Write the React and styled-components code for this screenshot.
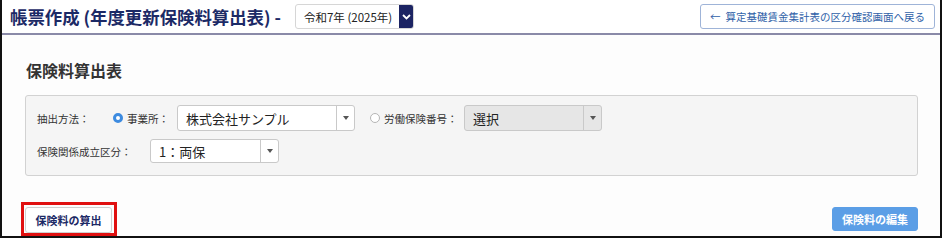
import React, { useState } from "react";
import styled, { createGlobalStyle } from "styled-components";

const GlobalStyle = createGlobalStyle`
  body {
    margin: 0;
    background: #ffffff;
    font-family: "Noto Sans CJK JP", "Noto Sans", sans-serif;
  }
`;

const Frame = styled.div`
  width: 938px;
  height: 236px;
  border: 2px solid #111;
  border-top: none;
  background: #fdfdfd;
  overflow: hidden;
  display: flex;
  flex-direction: column;
`;

const Header = styled.div`
  display: flex;
  align-items: center;
  height: 33px;
  padding: 0 5px 0 8px;
  background: #fff;
  border-bottom: 2px solid #8a8aa8;
`;

const Title = styled.h1`
  margin: 0 14px 0 0;
  font-size: 17.4px;
  font-weight: 700;
  color: #1c2a66;
`;

const YearSelect = styled.div`
  display: flex;
  height: 23px;
  border: 1px solid #d6d6d6;
  border-radius: 3px;
  background: #fff;
  overflow: hidden;
`;

const YearValue = styled.span`
  display: flex;
  align-items: center;
  padding: 0 7px 0 8px;
  font-size: 11.5px;
  color: #222;
`;

const YearArrow = styled.span`
  display: flex;
  align-items: center;
  justify-content: center;
  width: 14px;
  background: #1c2463;
`;

const BackButton = styled.button`
  margin-left: auto;
  height: 25px;
  padding: 0 9px;
  border: 1px solid #9fb4d8;
  border-radius: 3px;
  background: #fff;
  color: #2f5fa8;
  font-family: inherit;
  font-size: 10.5px;
  display: flex;
  align-items: center;
  gap: 5px;
`;

const Body = styled.div`
  padding: 25px 22px 0 23px;
`;

const SectionTitle = styled.h2`
  margin: 0 0 15px 1px;
  font-size: 16px;
  line-height: 20px;
  font-weight: 700;
  color: #333;
`;

const Panel = styled.div`
  background: #f5f5f5;
  border: 1px solid #d2d2d2;
  border-radius: 3px;
  padding: 9px 11px 12px;
  display: flex;
  flex-direction: column;
  gap: 8px;
`;

const Row = styled.div`
  display: flex;
  align-items: center;
`;

const Label = styled.span`
  font-size: 10.5px;
  color: #333;
  width: ${(p) => p.$width}px;
  flex-shrink: 0;
`;

const RadioOption = styled.label`
  display: flex;
  align-items: center;
  gap: 4px;
  margin-left: ${(p) => p.$offset || 0}px;
  width: ${(p) => p.$width}px;
  flex-shrink: 0;
  font-size: 10.5px;
  color: #333;
`;

const RadioDot = styled.span`
  width: 10px;
  height: 10px;
  border-radius: 50%;
  box-sizing: border-box;
  border: ${(p) => (p.$checked ? "3px solid #3d8be0" : "1px solid #b5b5b5")};
  background: #fff;
`;

const Select = styled.div`
  display: flex;
  width: ${(p) => p.$width}px;
  height: ${(p) => p.$height}px;
  box-sizing: border-box;
  border: 1px solid #c9c9c9;
  border-radius: 3px;
  background: ${(p) => (p.$disabled ? "#e6e6e6" : "#fff")};
`;

const SelectValue = styled.span`
  flex: 1;
  display: flex;
  align-items: center;
  padding-left: 8px;
  font-size: 13px;
  color: #222;
`;

const SelectArrow = styled.span`
  width: 17px;
  display: flex;
  align-items: center;
  justify-content: center;
  border-left: 1px solid #c9c9c9;
  &::after {
    content: "";
    border-left: 3.5px solid transparent;
    border-right: 3.5px solid transparent;
    border-top: 4px solid #555;
  }
`;

const Actions = styled.div`
  display: flex;
  align-items: center;
  justify-content: space-between;
  margin-top: 26px;
`;

const Highlight = styled.div`
  margin-left: -4px;
  border: 3px solid #e01010;
  padding: 1px 2px 0 1px;
`;

const ActionButton = styled.button`
  width: ${(p) => p.$width}px;
  height: ${(p) => p.$height}px;
  border-radius: 3px;
  font-family: inherit;
  font-size: 11px;
  font-weight: 700;
  border: 1px solid ${(p) => (p.$primary ? "#5b9ee6" : "#cfcfcf")};
  background: ${(p) => (p.$primary ? "#5b9ee6" : "#fff")};
  color: ${(p) => (p.$primary ? "#fff" : "#1c2a66")};
`;

function Chevron() {
  return (
    <svg width="9" height="6" viewBox="0 0 9 6">
      <path d="M1 1l3.5 3.5L8 1" fill="none" stroke="#fff" strokeWidth="1.8" />
    </svg>
  );
}

function App() {
  const [office] = useState("株式会社サンプル");
  return (
    <>
      <GlobalStyle />
      <Frame>
        <Header>
          <Title>帳票作成 (年度更新保険料算出表) -</Title>
          <YearSelect>
            <YearValue>令和7年 (2025年)</YearValue>
            <YearArrow>
              <Chevron />
            </YearArrow>
          </YearSelect>
          <BackButton>
            <span>←</span>
            <span>算定基礎賃金集計表の区分確認画面へ戻る</span>
          </BackButton>
        </Header>
        <Body>
          <SectionTitle>保険料算出表</SectionTitle>
          <Panel>
            <Row>
              <Label $width={76}>抽出方法：</Label>
              <RadioOption $width={64}>
                <RadioDot $checked />
                事業所：
              </RadioOption>
              <Select $width={178} $height={26}>
                <SelectValue>{office}</SelectValue>
                <SelectArrow />
              </Select>
              <RadioOption $width={94} $offset={15}>
                <RadioDot />
                労働保険番号：
              </RadioOption>
              <Select $width={138} $height={26} $disabled>
                <SelectValue>選択</SelectValue>
                <SelectArrow />
              </Select>
            </Row>
            <Row>
              <Label $width={113}>保険関係成立区分：</Label>
              <Select $width={129} $height={24}>
                <SelectValue>1：両保</SelectValue>
                <SelectArrow />
              </Select>
            </Row>
          </Panel>
          <Actions>
            <Highlight>
              <ActionButton $width={87} $height={26}>保険料の算出</ActionButton>
            </Highlight>
            <ActionButton $primary $width={86} $height={24}>保険料の編集</ActionButton>
          </Actions>
        </Body>
      </Frame>
    </>
  );
}

export default App;
